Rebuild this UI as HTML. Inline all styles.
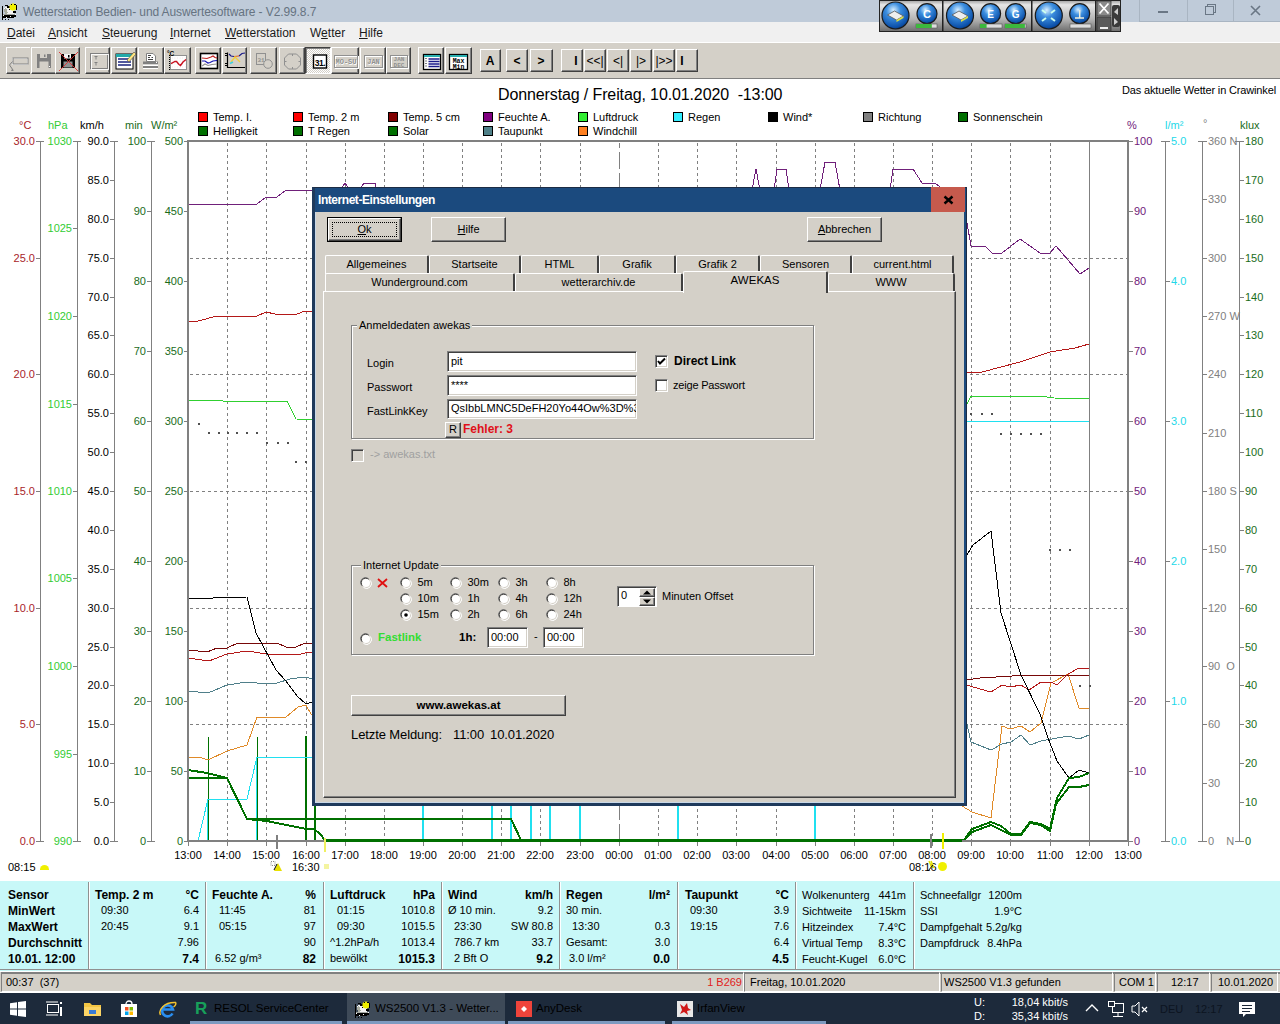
<!DOCTYPE html>
<html><head><meta charset="utf-8"><title>WS</title>
<style>
*{box-sizing:border-box}
html,body{margin:0;padding:0}
body{width:1280px;height:1024px;position:relative;overflow:hidden;background:#fff;font-family:"Liberation Sans", sans-serif;font-size:11px;color:#000}
.a{position:absolute;white-space:pre}
.btn{position:absolute;background:#d4d0c8;border-top:1px solid #fff;border-left:1px solid #fff;border-right:1px solid #404040;border-bottom:1px solid #404040;box-shadow:inset -1px -1px 0 #808080}
.tb{position:absolute;background:#d4d0c8;border-top:1px solid #fff;border-left:1px solid #fff;border-right:1px solid #404040;border-bottom:1px solid #404040;box-shadow:inset -1px -1px 0 #808080}
.sunk{position:absolute;border-top:1px solid #808080;border-left:1px solid #808080;border-right:1px solid #fff;border-bottom:1px solid #fff;box-shadow:inset 1px 1px 0 #404040}
</style></head><body>

<div class="a" style="left:0;top:0;width:1280px;height:22px;background:#bfcbd9"></div>
<svg class="a" style="left:0;top:0" width="22" height="22" viewBox="0 0 22 22" shape-rendering="crispEdges">
<rect x="2" y="6" width="1" height="13" fill="#000"/>
<path d="M4 8 L9 6 L12 9 L15 12 L14 14 L5 14Z" fill="#f4f4f4"/>
<path d="M4 9 L6 8 L8 13 L5 14Z" fill="#a8aca0"/>
<rect x="5" y="5" width="3" height="1" fill="#000"/><rect x="7" y="6" width="3" height="2" fill="#000"/>
<rect x="9" y="9" width="1" height="1" fill="#000"/><rect x="10" y="8" width="1" height="1" fill="#000"/><rect x="11" y="7" width="1" height="1" fill="#000"/>
<circle cx="13" cy="7" r="3.6" fill="#f0f000" shape-rendering="auto"/>
<rect x="16" y="5" width="1" height="5" fill="#000"/><rect x="14" y="4" width="2" height="1" fill="#000"/><rect x="11" y="4" width="1" height="1" fill="#000"/>
<rect x="13" y="11" width="3" height="2" fill="#000"/>
<rect x="3" y="14" width="13" height="1" fill="#a0a4a0"/>
<rect x="2" y="15" width="14" height="2" fill="#000"/><rect x="2" y="17" width="12" height="1" fill="#000"/>
<rect x="3" y="15" width="1" height="1" fill="#fff"/><rect x="6" y="17" width="1" height="1" fill="#fff"/><rect x="10" y="16" width="1" height="1" fill="#fff"/><rect x="15" y="14" width="1" height="1" fill="#fff"/>
<rect x="2" y="19" width="1" height="1" fill="#000"/><rect x="5" y="19" width="1" height="1" fill="#000"/><rect x="8" y="19" width="1" height="1" fill="#000"/>
</svg>
<div class="a" style="left:23px;top:5px;font-size:12px;color:#667381;letter-spacing:-0.1px">Wetterstation Bedien- und Auswertesoftware - V2.99.8.7</div>
<div class="a" style="left:1139px;top:0;width:141px;height:22px;background:#bfcbd9;border-left:1px solid #a9b5c2"></div>
<div class="a" style="left:1187px;top:0;width:1px;height:21px;background:#a9b5c2"></div>
<div class="a" style="left:1233px;top:0;width:1px;height:21px;background:#a9b5c2"></div>
<div class="a" style="left:1139px;top:21px;width:141px;height:1px;background:#a9b5c2"></div>
<div class="a" style="left:1158px;top:11px;width:10px;height:2px;background:#6a7785"></div>
<div class="a" style="left:1205px;top:6px;width:9px;height:9px;border:1px solid #6a7785;box-shadow:2px -2px 0 -1px #bfcbd9, 2px -2px 0 0 #6a7785"></div>
<svg class="a" style="left:1250px;top:5px" width="11" height="11"><path d="M1 1L10 10M10 1L1 10" stroke="#6a7785" stroke-width="1.6"/></svg>
<div class="a" style="left:0;top:22px;width:1280px;height:21px;background:#f0f0f0"></div>
<div class="a" style="left:7px;top:26px;font-size:12px;color:#1a1a1a"><u>D</u>atei</div>
<div class="a" style="left:48px;top:26px;font-size:12px;color:#1a1a1a"><u>A</u>nsicht</div>
<div class="a" style="left:102px;top:26px;font-size:12px;color:#1a1a1a"><u>S</u>teuerung</div>
<div class="a" style="left:170px;top:26px;font-size:12px;color:#1a1a1a"><u>I</u>nternet</div>
<div class="a" style="left:225px;top:26px;font-size:12px;color:#1a1a1a"><u>W</u>etterstation</div>
<div class="a" style="left:310px;top:26px;font-size:12px;color:#1a1a1a">W<u>e</u>tter</div>
<div class="a" style="left:359px;top:26px;font-size:12px;color:#1a1a1a"><u>H</u>ilfe</div>
<div class="a" style="left:0;top:42px;width:1280px;height:37px;background:#d4d0c8;border-top:1px solid #fff;border-bottom:1px solid #808080"></div>
<div class="tb" style="left:6px;top:47px;width:24px;height:27px;border-right:none;box-shadow:inset 0 -1px 0 #808080"></div>
<div class="tb" style="left:31px;top:47px;width:24px;height:27px;border-right:none;box-shadow:inset 0 -1px 0 #808080"></div>
<div class="tb" style="left:55px;top:47px;width:25px;height:27px"></div>
<div class="tb" style="left:85px;top:47px;width:25px;height:27px"></div>
<div class="tb" style="left:111px;top:47px;width:26px;height:27px"></div>
<div class="tb" style="left:138px;top:47px;width:26px;height:27px"></div>
<div class="tb" style="left:164px;top:47px;width:27px;height:27px"></div>
<div class="tb" style="left:195px;top:47px;width:26px;height:27px"></div>
<div class="tb" style="left:222px;top:47px;width:25px;height:27px"></div>
<div class="tb" style="left:250px;top:47px;width:27px;height:27px"></div>
<div class="tb" style="left:279px;top:47px;width:26px;height:27px"></div>
<div class="a" style="left:305px;top:47px;width:26px;height:27px;background:repeating-conic-gradient(#ffffff 0 25%, #d4d0c8 0 50%) 0 0/2px 2px;border-top:1px solid #404040;border-left:1px solid #404040;border-right:1px solid #fff;border-bottom:1px solid #fff;box-shadow:inset 1px 1px 0 #808080"></div>
<div class="tb" style="left:331px;top:47px;width:28px;height:27px"></div>
<div class="tb" style="left:360px;top:47px;width:26px;height:27px"></div>
<div class="tb" style="left:386px;top:47px;width:25px;height:27px"></div>
<div class="tb" style="left:418px;top:47px;width:26px;height:27px"></div>
<div class="tb" style="left:445px;top:47px;width:27px;height:27px"></div>
<div class="tb" style="left:480px;top:49px;width:21px;height:23px"></div>
<div class="tb" style="left:506px;top:49px;width:22px;height:23px"></div>
<div class="tb" style="left:530px;top:49px;width:23px;height:23px"></div>
<div class="tb" style="left:561px;top:49px;width:22px;height:23px"></div>
<div class="tb" style="left:584px;top:49px;width:22px;height:23px"></div>
<div class="tb" style="left:607px;top:49px;width:22px;height:23px"></div>
<div class="tb" style="left:630px;top:49px;width:22px;height:23px"></div>
<div class="tb" style="left:653px;top:49px;width:22px;height:23px"></div>
<div class="tb" style="left:676px;top:49px;width:22px;height:23px"></div>
<svg class="a" style="left:0;top:42px" width="700" height="38" viewBox="0 42 700 38"><rect x="12.5" y="58.5" width="15" height="6" fill="none" stroke="#fff"/><rect x="13" y="58" width="15" height="6" fill="none" stroke="#808080"/><path d="M12.5 61.5 L9.5 65 L13 70" stroke="#808080" fill="none"/><path d="M12 69 L14 71 H11Z" fill="#808080"/><path d="M37 54 H51 V68 H37Z" fill="#808080"/><rect x="40" y="54" width="7" height="4" fill="#d4d0c8"/><rect x="44" y="54.5" width="1.5" height="2.5" fill="#808080"/><rect x="39.5" y="61.5" width="9" height="6.5" fill="#d4d0c8"/><rect x="49" y="66" width="1" height="1" fill="#fff"/><path d="M61 54 H75 V68 H61Z" fill="#000"/><rect x="64" y="54" width="7" height="4.5" fill="#f4f4f4"/><rect x="68" y="55" width="1.5" height="2.5" fill="#000"/><rect x="63.5" y="61.5" width="9" height="6" fill="#909090"/><path d="M59 52L78 71M78 52L59 71" stroke="#e03030" stroke-width="0.9"/><rect x="90.5" y="53.5" width="17" height="15" fill="none" stroke="#808080"/><rect x="91.5" y="54.5" width="17" height="15" fill="none" stroke="#fff" stroke-opacity="0.9"/><path d="M94.5 56.5h3M96 56.5v3M94.5 62.5h3M96 62.5v3" stroke="#808080"/><rect x="116" y="54" width="17" height="15" fill="#fff" stroke="#000"/><rect x="116" y="54" width="17" height="3" fill="#2aa"/><path d="M118 59h13M118 62h13M118 65h13" stroke="#1a237e" stroke-width="1.5"/><path d="M127 60 L134 52 L136 54 L129 62Z" fill="#ffe680" stroke="#444" stroke-width="0.6"/><path d="M146.5 53.5 H153 L155.5 56 V61.5 H146.5Z" fill="#fff" stroke="#808080"/><path d="M148 55.5h3M148 57.5h2M151.5 57.5h1.5M148 59.5h5" stroke="#404040"/><rect x="143" y="61.5" width="15" height="3" fill="#808080"/><rect x="143" y="64.5" width="15" height="1.5" fill="#fff"/><rect x="143" y="66" width="15" height="2" fill="#808080"/><rect x="143" y="68" width="15" height="1" fill="#fff"/><rect x="156" y="62" width="1" height="1" fill="#fff"/><rect x="170.5" y="55.5" width="16" height="14" fill="#fff" stroke="#909090"/><path d="M172 58h14M172 61h14M172 64h14M172 67h14" stroke="#e8b8c0" stroke-width="0.6" stroke-dasharray="0.6 2"/><path d="M169.5 55 V70" stroke="#000" stroke-dasharray="1 1"/><path d="M171 63.6 L175 61.5 L176.5 61.5 L179 64.5 L180.5 65.5 L183 62 L186 59.5" stroke="#c81020" fill="none" stroke-width="1.4"/><text x="167" y="55.5" font-size="6.5" font-weight="bold" font-family="Liberation Sans" fill="#000">°C</text><rect x="200.5" y="53.5" width="17" height="15" fill="#fff" stroke="#000" stroke-width="1.6"/><path d="M202 58 L207 58.5 L211 57 L213 56 L215 57.5 L217 58" stroke="#c02020" fill="none" stroke-width="1.2"/><path d="M202 61 L205 61 L208 63 L210 62.5 L213 61 L217 60.5" stroke="#1010b0" fill="none" stroke-width="1.2"/><path d="M202 66 L205 64 L208 65.5 L212 64.5 L217 64" stroke="#909090" fill="none" stroke-width="1.1"/><path d="M227.5 52.5 V67.5 H245" stroke="#000" fill="none" stroke-width="1.2"/><path d="M225 53.5h2M225 55.5h2M225 63.5h2M225 65.5h2" stroke="#000"/><path d="M229 54 L231 56 L234 56.5 M239 56 L242 53.5 L245 53" stroke="#1a1a8a" fill="none" stroke-width="1.2"/><path d="M234 56.5 L239 56" stroke="#e06020" stroke-width="1.2"/><path d="M231 62 L235 57 L240 62" stroke="#f0d040" fill="none" stroke-width="1.4"/><path d="M230 63.5 L233 62" stroke="#40d0e0" stroke-width="1.6"/><rect x="256.5" y="53.5" width="9" height="11" fill="none" stroke="#909090"/><text x="261" y="61.5" font-size="6" font-family="Liberation Mono" font-weight="bold" fill="#909090" text-anchor="middle">31</text><circle cx="268" cy="64" r="4.3" fill="#d4d0c8" stroke="#909090"/><path d="M288.5 54 H296.5 L300.5 58 V65 L296.5 69 H288.5 L284.5 65 V58Z" fill="none" stroke="#909090"/><path d="M292.5 54v2M292.5 67v2M284.5 61.5h2M298.5 61.5h2" stroke="#909090"/><rect x="313.5" y="55" width="13" height="13" fill="#fff" stroke="#000" stroke-width="1.4"/><text x="320" y="65.5" font-size="8.5" font-weight="bold" text-anchor="middle" font-family="Liberation Sans" letter-spacing="-0.5">31.</text><rect x="335.5" y="56.5" width="23" height="12" fill="none" stroke="#fff"/><rect x="334.5" y="55.5" width="23" height="12" fill="none" stroke="#909090"/><text x="346.6" y="64.6" font-size="7" text-anchor="middle" fill="#fff" font-family="Liberation Mono" font-weight="bold">MO-SU</text><text x="346.0" y="64" font-size="7" text-anchor="middle" fill="#909090" font-family="Liberation Mono" font-weight="bold">MO-SU</text><rect x="365.5" y="56.5" width="18" height="12" fill="none" stroke="#fff"/><rect x="364.5" y="55.5" width="18" height="12" fill="none" stroke="#909090"/><text x="374.1" y="64.6" font-size="7" text-anchor="middle" fill="#fff" font-family="Liberation Mono" font-weight="bold">JAN</text><text x="373.5" y="64" font-size="7" text-anchor="middle" fill="#909090" font-family="Liberation Mono" font-weight="bold">JAN</text><rect x="391.5" y="56.5" width="17" height="12" fill="none" stroke="#fff"/><rect x="390.5" y="55.5" width="17" height="12" fill="none" stroke="#909090"/><text x="399.0" y="61" font-size="6" text-anchor="middle" fill="#909090" font-family="Liberation Mono" font-weight="bold">JAN</text><text x="399.0" y="66.5" font-size="6" text-anchor="middle" fill="#909090" font-family="Liberation Mono" font-weight="bold">DEC</text><rect x="423.5" y="54.5" width="17" height="15" fill="#fff" stroke="#000" stroke-width="1.3"/><rect x="424" y="55" width="16" height="2" fill="#2ab0b0"/><path d="M428.5 59h11M428.5 61.5h11M428.5 64h11M428.5 66.5h11" stroke="#1a1a8a" stroke-width="1.4"/><path d="M426 58v10" stroke="#000" stroke-dasharray="1 1.5"/><rect x="449.5" y="54.5" width="18" height="15" fill="#fff" stroke="#000" stroke-width="1.3"/><rect x="450" y="55" width="17" height="2" fill="#2ab0b0"/><text x="458.5" y="62.5" font-size="6.5" font-weight="bold" text-anchor="middle" font-family="Liberation Mono">Max</text><text x="458.5" y="68.5" font-size="6.5" font-weight="bold" text-anchor="middle" font-family="Liberation Mono">Min</text></svg>
<div class="a" style="left:470px;width:40px;text-align:center;top:54px;font-size:12px;font-weight:bold">A</div>
<div class="a" style="left:497px;width:40px;text-align:center;top:54px;font-size:12px;font-weight:bold">&lt;</div>
<div class="a" style="left:521px;width:40px;text-align:center;top:54px;font-size:12px;font-weight:bold">&gt;</div>
<div class="a" style="left:556px;width:40px;text-align:center;top:54px;font-size:12px;font-weight:bold">I</div>
<div class="a" style="left:575px;width:40px;text-align:center;top:54px;font-size:12px;font-weight:normal">&lt;&lt;|</div>
<div class="a" style="left:598px;width:40px;text-align:center;top:54px;font-size:12px;font-weight:normal">&lt;|</div>
<div class="a" style="left:621px;width:40px;text-align:center;top:54px;font-size:12px;font-weight:normal">|&gt;</div>
<div class="a" style="left:644px;width:40px;text-align:center;top:54px;font-size:12px;font-weight:normal">|&gt;&gt;</div>
<div class="a" style="left:662px;width:40px;text-align:center;top:54px;font-size:12px;font-weight:bold">I</div>
<svg class="a" style="left:879px;top:0" width="242" height="32" viewBox="0 0 242 32"><defs><linearGradient id="wg" x1="0" y1="0" x2="0" y2="1"><stop offset="0" stop-color="#9a9a9a"/><stop offset="0.15" stop-color="#e6e6e6"/><stop offset="0.6" stop-color="#b4b4b4"/><stop offset="1" stop-color="#6a6a6a"/></linearGradient><radialGradient id="bg1" cx="0.42" cy="0.3" r="0.75"><stop offset="0" stop-color="#d8efff"/><stop offset="0.35" stop-color="#3d8fe0"/><stop offset="0.85" stop-color="#0b4fa8"/><stop offset="1" stop-color="#0a2f66"/></radialGradient></defs><rect x="0" y="0" width="242" height="32" fill="url(#wg)"/><rect x="0.5" y="0.5" width="241" height="31" fill="none" stroke="#222"/><rect x="63" y="0" width="1.5" height="32" fill="#222"/><rect x="152" y="0" width="1.5" height="32" fill="#222"/><rect x="216" y="0" width="1.5" height="32" fill="#222"/><circle cx="16.5" cy="15.5" r="13.5" fill="url(#bg1)" stroke="#1a1a1a" stroke-width="1.2"/><circle cx="48" cy="13.7" r="10" fill="url(#bg1)" stroke="#1a1a1a" stroke-width="1.2"/><circle cx="81" cy="15.5" r="13.5" fill="url(#bg1)" stroke="#1a1a1a" stroke-width="1.2"/><circle cx="111.6" cy="13.7" r="10" fill="url(#bg1)" stroke="#1a1a1a" stroke-width="1.2"/><circle cx="136.6" cy="13.7" r="10" fill="url(#bg1)" stroke="#1a1a1a" stroke-width="1.2"/><circle cx="169.8" cy="15.5" r="13.5" fill="url(#bg1)" stroke="#1a1a1a" stroke-width="1.2"/><circle cx="200.7" cy="13.7" r="10" fill="url(#bg1)" stroke="#1a1a1a" stroke-width="1.2"/><path d="M8.5 15 L15.5 11 L24.5 16 L17.5 20Z" fill="#eee" stroke="#555" stroke-width="0.8"/><path d="M17.5 20 L24.5 16 L24.5 18 L17.5 22Z" fill="#dd4"/><path d="M73 15 L80 11 L89 16 L82 20Z" fill="#eee" stroke="#555" stroke-width="0.8"/><path d="M82 20 L89 16 L89 18 L82 22Z" fill="#dd4"/><path d="M163 10 L167 13 M176 10 L172 13 M163 21 L167 18 M176 21 L172 18" stroke="#cfe" stroke-width="2"/><path d="M196 18 L205 18 M200.7 10 V18" stroke="#eed" stroke-width="1.5"/><text x="48" y="17.5" font-family="Liberation Sans" font-weight="bold" font-size="11" fill="#fff" text-anchor="middle">C</text><text x="111.6" y="17.5" font-family="Liberation Sans" font-weight="bold" font-size="10" fill="#fff" text-anchor="middle">E</text><text x="136.6" y="17.5" font-family="Liberation Sans" font-weight="bold" font-size="10" fill="#fff" text-anchor="middle">G</text><rect x="37" y="24" width="21" height="4" fill="#ddd" stroke="#555" stroke-width="0.6"/><rect x="37" y="24" width="15.8" height="4" fill="#3cb83c"/><rect x="101" y="24" width="22" height="4" fill="#ddd" stroke="#555" stroke-width="0.6"/><rect x="101" y="24" width="6.6" height="4" fill="#3cb83c"/><rect x="126" y="24" width="21" height="4" fill="#ddd" stroke="#555" stroke-width="0.6"/><rect x="126" y="24" width="19.9" height="4" fill="#3cb83c"/><rect x="191" y="24" width="21" height="4" fill="#ddd" stroke="#555" stroke-width="0.6"/><rect x="191" y="24" width="0.0" height="4" fill="#3cb83c"/><rect x="218" y="1" width="14" height="15" fill="#8a8a8a" stroke="#333" stroke-width="0.8"/><path d="M220.5 3.5L229.5 13.5M229.5 3.5L220.5 13.5" stroke="#fff" stroke-width="1.8"/><rect x="218" y="17" width="14" height="14" fill="#5a5a5a" stroke="#333" stroke-width="0.8"/><rect x="221" y="27" width="8" height="2" fill="#eee"/><rect x="233" y="5" width="8" height="22" rx="2" fill="#3a3a3a"/><path d="M239 8L235 12L239 15Z M235 18L239 22L235 25Z" fill="#ccc"/></svg>
<svg class="a" style="left:0;top:80px" width="1280" height="801" viewBox="0 80 1280 801" shape-rendering="crispEdges"><line x1="227.5" y1="143" x2="227.5" y2="840" stroke="#808080" stroke-width="1" stroke-dasharray="3 3"/><line x1="266.5" y1="143" x2="266.5" y2="840" stroke="#808080" stroke-width="1" stroke-dasharray="3 3"/><line x1="306.5" y1="143" x2="306.5" y2="840" stroke="#808080" stroke-width="1" stroke-dasharray="3 3"/><line x1="345.5" y1="143" x2="345.5" y2="840" stroke="#808080" stroke-width="1" stroke-dasharray="3 3"/><line x1="384.5" y1="143" x2="384.5" y2="840" stroke="#808080" stroke-width="1" stroke-dasharray="3 3"/><line x1="423.5" y1="143" x2="423.5" y2="840" stroke="#808080" stroke-width="1" stroke-dasharray="3 3"/><line x1="462.5" y1="143" x2="462.5" y2="840" stroke="#808080" stroke-width="1" stroke-dasharray="3 3"/><line x1="501.5" y1="143" x2="501.5" y2="840" stroke="#808080" stroke-width="1" stroke-dasharray="3 3"/><line x1="540.5" y1="143" x2="540.5" y2="840" stroke="#808080" stroke-width="1" stroke-dasharray="3 3"/><line x1="580.5" y1="143" x2="580.5" y2="840" stroke="#808080" stroke-width="1" stroke-dasharray="3 3"/><line x1="619.5" y1="143" x2="619.5" y2="840" stroke="#808080" stroke-width="1" stroke-dasharray="17 4" stroke-dashoffset="12"/><line x1="658.5" y1="143" x2="658.5" y2="840" stroke="#808080" stroke-width="1" stroke-dasharray="3 3"/><line x1="697.5" y1="143" x2="697.5" y2="840" stroke="#808080" stroke-width="1" stroke-dasharray="3 3"/><line x1="736.5" y1="143" x2="736.5" y2="840" stroke="#808080" stroke-width="1" stroke-dasharray="3 3"/><line x1="776.5" y1="143" x2="776.5" y2="840" stroke="#808080" stroke-width="1" stroke-dasharray="3 3"/><line x1="815.5" y1="143" x2="815.5" y2="840" stroke="#808080" stroke-width="1" stroke-dasharray="3 3"/><line x1="854.5" y1="143" x2="854.5" y2="840" stroke="#808080" stroke-width="1" stroke-dasharray="3 3"/><line x1="893.5" y1="143" x2="893.5" y2="840" stroke="#808080" stroke-width="1" stroke-dasharray="3 3"/><line x1="932.5" y1="143" x2="932.5" y2="840" stroke="#808080" stroke-width="1" stroke-dasharray="3 3"/><line x1="971.5" y1="143" x2="971.5" y2="840" stroke="#808080" stroke-width="1" stroke-dasharray="3 3"/><line x1="1010.5" y1="143" x2="1010.5" y2="840" stroke="#808080" stroke-width="1" stroke-dasharray="3 3"/><line x1="1050.5" y1="143" x2="1050.5" y2="840" stroke="#808080" stroke-width="1" stroke-dasharray="3 3"/><line x1="1089.5" y1="142" x2="1089.5" y2="840" stroke="#808080" stroke-width="1"/><line x1="190" y1="258.5" x2="1128" y2="258.5" stroke="#808080" stroke-width="1" stroke-dasharray="3 3"/><line x1="190" y1="374.5" x2="1128" y2="374.5" stroke="#808080" stroke-width="1" stroke-dasharray="3 3"/><line x1="190" y1="491.5" x2="1128" y2="491.5" stroke="#808080" stroke-width="1" stroke-dasharray="3 3"/><line x1="190" y1="608.5" x2="1128" y2="608.5" stroke="#808080" stroke-width="1" stroke-dasharray="3 3"/><line x1="190" y1="724.5" x2="1128" y2="724.5" stroke="#808080" stroke-width="1" stroke-dasharray="3 3"/></svg>
<svg class="a" style="left:0;top:80px" width="1280" height="801" viewBox="0 80 1280 801" shape-rendering="crispEdges"><rect x="198" y="423" width="2" height="2" fill="#505050"/><rect x="208" y="432" width="2" height="2" fill="#505050"/><rect x="218" y="432" width="2" height="2" fill="#505050"/><rect x="227" y="432" width="2" height="2" fill="#505050"/><rect x="236" y="432" width="2" height="2" fill="#505050"/><rect x="246" y="432" width="2" height="2" fill="#505050"/><rect x="256" y="432" width="2" height="2" fill="#505050"/><rect x="266" y="442" width="2" height="2" fill="#505050"/><rect x="277" y="442" width="2" height="2" fill="#505050"/><rect x="287" y="442" width="2" height="2" fill="#505050"/><rect x="295" y="461" width="2" height="2" fill="#505050"/><rect x="305" y="461" width="2" height="2" fill="#505050"/><rect x="970" y="413" width="2" height="2" fill="#505050"/><rect x="981" y="413" width="2" height="2" fill="#505050"/><rect x="991" y="413" width="2" height="2" fill="#505050"/><rect x="1000" y="433" width="2" height="2" fill="#505050"/><rect x="1010" y="433" width="2" height="2" fill="#505050"/><rect x="1020" y="433" width="2" height="2" fill="#505050"/><rect x="1030" y="433" width="2" height="2" fill="#505050"/><rect x="1040" y="433" width="2" height="2" fill="#505050"/><rect x="1049" y="549" width="2" height="2" fill="#505050"/><rect x="1059" y="549" width="2" height="2" fill="#505050"/><rect x="1069" y="549" width="2" height="2" fill="#505050"/><rect x="1079" y="685" width="2" height="2" fill="#505050"/><rect x="1089" y="685" width="2" height="2" fill="#505050"/><rect x="207" y="799" width="2" height="42" fill="#20e0f0"/><rect x="256" y="757" width="2" height="84" fill="#20e0f0"/><rect x="422" y="790" width="2" height="51" fill="#20e0f0"/><rect x="491" y="790" width="2" height="51" fill="#20e0f0"/><rect x="510" y="790" width="2" height="51" fill="#20e0f0"/><rect x="530" y="790" width="2" height="51" fill="#20e0f0"/><rect x="549" y="790" width="2" height="51" fill="#20e0f0"/><rect x="579" y="790" width="2" height="51" fill="#20e0f0"/><rect x="677" y="790" width="2" height="51" fill="#20e0f0"/><rect x="814" y="790" width="2" height="51" fill="#20e0f0"/><rect x="208" y="737" width="1" height="104" fill="#007000"/><rect x="257" y="737" width="1" height="104" fill="#007000"/><rect x="305" y="736" width="2" height="105" fill="#007000"/><rect x="314" y="790" width="2" height="51" fill="#007000"/><polyline points="198,841 208,799 247,799 257,757 330,757" fill="none" stroke="#20e0f0" stroke-width="1" stroke-linejoin="round" /><polyline points="940,421 1089,421" fill="none" stroke="#20e0f0" stroke-width="1" stroke-linejoin="round" /><polyline points="188,204 257,204 266,197 277,197 286,190 340,190 345,183 350,190 359,190 364,183 375,183 377,190 750,190 752,190 756,169 760,190 774,190 777,169 786,169 789,190 820,190 825,162 835,162 840,190 890,190 893,169 913,169 922,183 935,183 950,195 966,217 971,246 985,246 992,253 1002,253 1020,239 1040,253 1050,253 1056,246 1080,274 1089,268" fill="none" stroke="#70207a" stroke-width="1" stroke-linejoin="round" /><polyline points="188,757 199,757 208,760 227,751 247,745 257,717 286,717 298,707 306,705 311,714 330,730 960,805 962,806 972,812 991,818 1002,726 1010,729 1021,726 1030,732 1041,723 1051,683 1068,674 1079,708 1089,708" fill="none" stroke="#e08a28" stroke-width="1" stroke-linejoin="round" /><polyline points="188,691 208,693 227,685 247,682 267,684 277,683 290,679 305,677 313,679 330,680 960,715 967,724 971,742 991,750 1002,744 1011,742 1021,735 1030,745 1041,741 1068,736 1079,739 1089,735" fill="none" stroke="#4f7f8a" stroke-width="1" stroke-linejoin="round" /><polyline points="188,321 198,321 217,316 257,316 266,312 275,314 297,314 305,311 330,311 966,373 982,372 1020,362 1050,352 1075,348 1089,344" fill="none" stroke="#b41818" stroke-width="1" stroke-linejoin="round" /><polyline points="188,400 223,401 287,401 296,419 330,420 960,410 966,406 971,396 1040,396 1054,398 1089,399" fill="none" stroke="#30d030" stroke-width="1" stroke-linejoin="round" /><polyline points="188,650 207,652 217,648 227,648 238,643 277,643 286,647 296,647 305,643 330,643 966,680 980,678 1028,675 1089,675" fill="none" stroke="#780808" stroke-width="1" stroke-linejoin="round" /><polyline points="188,658 209,661 227,654 247,651 267,654 301,654 309,652 330,652 966,685 991,692 1002,685 1010,687 1021,685 1029,690 1041,682 1051,682 1057,685 1068,674 1079,668 1089,668" fill="none" stroke="#b41818" stroke-width="1" stroke-linejoin="round" /><polyline points="188,598 213,598 247,597 256,633 276,670 286,681 297,696 306,704 312,702 330,690 960,570 967,555 973,545 991,531 1001,613 1021,675 1040,714 1048,738 1057,761 1069,778 1079,770 1089,773" fill="none" stroke="#000" stroke-width="1" stroke-linejoin="round" /><polyline points="188,770 207,773 227,778 247,819 267,821 306,829 314,829 320,834 325,840 960,840 964,840 972,829 991,822 1001,826 1011,834 1021,834 1030,822 1041,824 1050,829 1057,798 1069,778 1079,777 1089,773" fill="none" stroke="#007000" stroke-width="2" stroke-linejoin="round" /><polyline points="188,778 227,778 247,819 320,819 511,819 521,840" fill="none" stroke="#007000" stroke-width="2" stroke-linejoin="round" /><polyline points="964,840 972,832 991,825 1011,835 1021,835 1030,823 1041,825 1050,831 1056,804 1069,787 1079,787 1089,785" fill="none" stroke="#007000" stroke-width="2" stroke-linejoin="round" /></svg>
<svg class="a" style="left:0;top:80px" width="1280" height="801" viewBox="0 80 1280 801" shape-rendering="crispEdges"><rect x="187" y="140" width="2" height="702" fill="#808080"/><rect x="187" y="140" width="942" height="2" fill="#808080"/><rect x="1127" y="140" width="2" height="702" fill="#808080"/><rect x="187" y="840" width="942" height="2" fill="#808080"/><rect x="325" y="840" width="637" height="2" fill="#007000"/><rect x="188" y="842" width="1" height="4" fill="#808080"/><rect x="227" y="842" width="1" height="4" fill="#808080"/><rect x="266" y="842" width="1" height="4" fill="#808080"/><rect x="306" y="842" width="1" height="4" fill="#808080"/><rect x="345" y="842" width="1" height="4" fill="#808080"/><rect x="384" y="842" width="1" height="4" fill="#808080"/><rect x="423" y="842" width="1" height="4" fill="#808080"/><rect x="462" y="842" width="1" height="4" fill="#808080"/><rect x="501" y="842" width="1" height="4" fill="#808080"/><rect x="540" y="842" width="1" height="4" fill="#808080"/><rect x="580" y="842" width="1" height="4" fill="#808080"/><rect x="619" y="842" width="1" height="4" fill="#808080"/><rect x="658" y="842" width="1" height="4" fill="#808080"/><rect x="697" y="842" width="1" height="4" fill="#808080"/><rect x="736" y="842" width="1" height="4" fill="#808080"/><rect x="776" y="842" width="1" height="4" fill="#808080"/><rect x="815" y="842" width="1" height="4" fill="#808080"/><rect x="854" y="842" width="1" height="4" fill="#808080"/><rect x="893" y="842" width="1" height="4" fill="#808080"/><rect x="932" y="842" width="1" height="4" fill="#808080"/><rect x="971" y="842" width="1" height="4" fill="#808080"/><rect x="1010" y="842" width="1" height="4" fill="#808080"/><rect x="1050" y="842" width="1" height="4" fill="#808080"/><rect x="1089" y="842" width="1" height="4" fill="#808080"/><rect x="1128" y="842" width="1" height="4" fill="#808080"/><rect x="276" y="835" width="2" height="14" fill="#808080"/><rect x="930" y="834" width="2" height="14" fill="#808080"/><rect x="942" y="833" width="2" height="16" fill="#f0f000"/><rect x="324" y="838" width="2" height="14" fill="#f0f060"/><rect x="40" y="141" width="1" height="701" fill="#808080"/><rect x="77" y="141" width="1" height="701" fill="#808080"/><rect x="114" y="141" width="1" height="701" fill="#808080"/><rect x="151" y="141" width="1" height="701" fill="#808080"/><rect x="1165" y="141" width="1" height="701" fill="#808080"/><rect x="1202" y="141" width="1" height="701" fill="#808080"/><rect x="1239" y="141" width="1" height="701" fill="#808080"/></svg>
<div class="a" style="left:-5px;width:40px;text-align:right;top:135px;color:#a81e2a">30.0</div><div class="a" style="left:36px;top:141px;width:8px;height:1px;background:#808080"></div><div class="a" style="left:-5px;width:40px;text-align:right;top:252px;color:#a81e2a">25.0</div><div class="a" style="left:36px;top:258px;width:4px;height:1px;background:#808080"></div><div class="a" style="left:-5px;width:40px;text-align:right;top:368px;color:#a81e2a">20.0</div><div class="a" style="left:36px;top:374px;width:4px;height:1px;background:#808080"></div><div class="a" style="left:-5px;width:40px;text-align:right;top:485px;color:#a81e2a">15.0</div><div class="a" style="left:36px;top:491px;width:4px;height:1px;background:#808080"></div><div class="a" style="left:-5px;width:40px;text-align:right;top:602px;color:#a81e2a">10.0</div><div class="a" style="left:36px;top:608px;width:4px;height:1px;background:#808080"></div><div class="a" style="left:-5px;width:40px;text-align:right;top:718px;color:#a81e2a">5.0</div><div class="a" style="left:36px;top:724px;width:4px;height:1px;background:#808080"></div><div class="a" style="left:-5px;width:40px;text-align:right;top:835px;color:#a81e2a">0.0</div><div class="a" style="left:36px;top:841px;width:8px;height:1px;background:#808080"></div>
<div class="a" style="left:32px;width:40px;text-align:right;top:135px;color:#33cc33">1030</div><div class="a" style="left:73px;top:141px;width:8px;height:1px;background:#808080"></div><div class="a" style="left:32px;width:40px;text-align:right;top:222px;color:#33cc33">1025</div><div class="a" style="left:73px;top:228px;width:4px;height:1px;background:#808080"></div><div class="a" style="left:32px;width:40px;text-align:right;top:310px;color:#33cc33">1020</div><div class="a" style="left:73px;top:316px;width:4px;height:1px;background:#808080"></div><div class="a" style="left:32px;width:40px;text-align:right;top:398px;color:#33cc33">1015</div><div class="a" style="left:73px;top:404px;width:4px;height:1px;background:#808080"></div><div class="a" style="left:32px;width:40px;text-align:right;top:485px;color:#33cc33">1010</div><div class="a" style="left:73px;top:491px;width:4px;height:1px;background:#808080"></div><div class="a" style="left:32px;width:40px;text-align:right;top:572px;color:#33cc33">1005</div><div class="a" style="left:73px;top:578px;width:4px;height:1px;background:#808080"></div><div class="a" style="left:32px;width:40px;text-align:right;top:660px;color:#33cc33">1000</div><div class="a" style="left:73px;top:666px;width:4px;height:1px;background:#808080"></div><div class="a" style="left:32px;width:40px;text-align:right;top:748px;color:#33cc33">995</div><div class="a" style="left:73px;top:754px;width:4px;height:1px;background:#808080"></div><div class="a" style="left:32px;width:40px;text-align:right;top:835px;color:#33cc33">990</div><div class="a" style="left:73px;top:841px;width:8px;height:1px;background:#808080"></div>
<div class="a" style="left:69px;width:40px;text-align:right;top:135px;color:#000">90.0</div><div class="a" style="left:110px;top:141px;width:8px;height:1px;background:#808080"></div><div class="a" style="left:69px;width:40px;text-align:right;top:174px;color:#000">85.0</div><div class="a" style="left:110px;top:180px;width:4px;height:1px;background:#808080"></div><div class="a" style="left:69px;width:40px;text-align:right;top:213px;color:#000">80.0</div><div class="a" style="left:110px;top:219px;width:4px;height:1px;background:#808080"></div><div class="a" style="left:69px;width:40px;text-align:right;top:252px;color:#000">75.0</div><div class="a" style="left:110px;top:258px;width:4px;height:1px;background:#808080"></div><div class="a" style="left:69px;width:40px;text-align:right;top:291px;color:#000">70.0</div><div class="a" style="left:110px;top:297px;width:4px;height:1px;background:#808080"></div><div class="a" style="left:69px;width:40px;text-align:right;top:329px;color:#000">65.0</div><div class="a" style="left:110px;top:335px;width:4px;height:1px;background:#808080"></div><div class="a" style="left:69px;width:40px;text-align:right;top:368px;color:#000">60.0</div><div class="a" style="left:110px;top:374px;width:4px;height:1px;background:#808080"></div><div class="a" style="left:69px;width:40px;text-align:right;top:407px;color:#000">55.0</div><div class="a" style="left:110px;top:413px;width:4px;height:1px;background:#808080"></div><div class="a" style="left:69px;width:40px;text-align:right;top:446px;color:#000">50.0</div><div class="a" style="left:110px;top:452px;width:4px;height:1px;background:#808080"></div><div class="a" style="left:69px;width:40px;text-align:right;top:485px;color:#000">45.0</div><div class="a" style="left:110px;top:491px;width:4px;height:1px;background:#808080"></div><div class="a" style="left:69px;width:40px;text-align:right;top:524px;color:#000">40.0</div><div class="a" style="left:110px;top:530px;width:4px;height:1px;background:#808080"></div><div class="a" style="left:69px;width:40px;text-align:right;top:563px;color:#000">35.0</div><div class="a" style="left:110px;top:569px;width:4px;height:1px;background:#808080"></div><div class="a" style="left:69px;width:40px;text-align:right;top:602px;color:#000">30.0</div><div class="a" style="left:110px;top:608px;width:4px;height:1px;background:#808080"></div><div class="a" style="left:69px;width:40px;text-align:right;top:641px;color:#000">25.0</div><div class="a" style="left:110px;top:647px;width:4px;height:1px;background:#808080"></div><div class="a" style="left:69px;width:40px;text-align:right;top:679px;color:#000">20.0</div><div class="a" style="left:110px;top:685px;width:4px;height:1px;background:#808080"></div><div class="a" style="left:69px;width:40px;text-align:right;top:718px;color:#000">15.0</div><div class="a" style="left:110px;top:724px;width:4px;height:1px;background:#808080"></div><div class="a" style="left:69px;width:40px;text-align:right;top:757px;color:#000">10.0</div><div class="a" style="left:110px;top:763px;width:4px;height:1px;background:#808080"></div><div class="a" style="left:69px;width:40px;text-align:right;top:796px;color:#000">5.0</div><div class="a" style="left:110px;top:802px;width:4px;height:1px;background:#808080"></div><div class="a" style="left:69px;width:40px;text-align:right;top:835px;color:#000">0.0</div><div class="a" style="left:110px;top:841px;width:8px;height:1px;background:#808080"></div>
<div class="a" style="left:106px;width:40px;text-align:right;top:135px;color:#1a6c1a">100</div><div class="a" style="left:147px;top:141px;width:8px;height:1px;background:#808080"></div><div class="a" style="left:106px;width:40px;text-align:right;top:205px;color:#1a6c1a">90</div><div class="a" style="left:147px;top:211px;width:4px;height:1px;background:#808080"></div><div class="a" style="left:106px;width:40px;text-align:right;top:275px;color:#1a6c1a">80</div><div class="a" style="left:147px;top:281px;width:4px;height:1px;background:#808080"></div><div class="a" style="left:106px;width:40px;text-align:right;top:345px;color:#1a6c1a">70</div><div class="a" style="left:147px;top:351px;width:4px;height:1px;background:#808080"></div><div class="a" style="left:106px;width:40px;text-align:right;top:415px;color:#1a6c1a">60</div><div class="a" style="left:147px;top:421px;width:4px;height:1px;background:#808080"></div><div class="a" style="left:106px;width:40px;text-align:right;top:485px;color:#1a6c1a">50</div><div class="a" style="left:147px;top:491px;width:4px;height:1px;background:#808080"></div><div class="a" style="left:106px;width:40px;text-align:right;top:555px;color:#1a6c1a">40</div><div class="a" style="left:147px;top:561px;width:4px;height:1px;background:#808080"></div><div class="a" style="left:106px;width:40px;text-align:right;top:625px;color:#1a6c1a">30</div><div class="a" style="left:147px;top:631px;width:4px;height:1px;background:#808080"></div><div class="a" style="left:106px;width:40px;text-align:right;top:695px;color:#1a6c1a">20</div><div class="a" style="left:147px;top:701px;width:4px;height:1px;background:#808080"></div><div class="a" style="left:106px;width:40px;text-align:right;top:765px;color:#1a6c1a">10</div><div class="a" style="left:147px;top:771px;width:4px;height:1px;background:#808080"></div><div class="a" style="left:106px;width:40px;text-align:right;top:835px;color:#1a6c1a">0</div><div class="a" style="left:147px;top:841px;width:8px;height:1px;background:#808080"></div>
<div class="a" style="left:143px;width:40px;text-align:right;top:135px;color:#1a6c1a">500</div><div class="a" style="left:184px;top:141px;width:8px;height:1px;background:#808080"></div><div class="a" style="left:143px;width:40px;text-align:right;top:205px;color:#1a6c1a">450</div><div class="a" style="left:184px;top:211px;width:4px;height:1px;background:#808080"></div><div class="a" style="left:143px;width:40px;text-align:right;top:275px;color:#1a6c1a">400</div><div class="a" style="left:184px;top:281px;width:4px;height:1px;background:#808080"></div><div class="a" style="left:143px;width:40px;text-align:right;top:345px;color:#1a6c1a">350</div><div class="a" style="left:184px;top:351px;width:4px;height:1px;background:#808080"></div><div class="a" style="left:143px;width:40px;text-align:right;top:415px;color:#1a6c1a">300</div><div class="a" style="left:184px;top:421px;width:4px;height:1px;background:#808080"></div><div class="a" style="left:143px;width:40px;text-align:right;top:485px;color:#1a6c1a">250</div><div class="a" style="left:184px;top:491px;width:4px;height:1px;background:#808080"></div><div class="a" style="left:143px;width:40px;text-align:right;top:555px;color:#1a6c1a">200</div><div class="a" style="left:184px;top:561px;width:4px;height:1px;background:#808080"></div><div class="a" style="left:143px;width:40px;text-align:right;top:625px;color:#1a6c1a">150</div><div class="a" style="left:184px;top:631px;width:4px;height:1px;background:#808080"></div><div class="a" style="left:143px;width:40px;text-align:right;top:695px;color:#1a6c1a">100</div><div class="a" style="left:184px;top:701px;width:4px;height:1px;background:#808080"></div><div class="a" style="left:143px;width:40px;text-align:right;top:765px;color:#1a6c1a">50</div><div class="a" style="left:184px;top:771px;width:4px;height:1px;background:#808080"></div><div class="a" style="left:143px;width:40px;text-align:right;top:835px;color:#1a6c1a">0</div><div class="a" style="left:184px;top:841px;width:8px;height:1px;background:#808080"></div>
<div class="a" style="left:1134px;top:135px;color:#70207a">100</div><div class="a" style="left:1129px;top:141px;width:4px;height:1px;background:#808080"></div><div class="a" style="left:1134px;top:205px;color:#70207a">90</div><div class="a" style="left:1129px;top:211px;width:4px;height:1px;background:#808080"></div><div class="a" style="left:1134px;top:275px;color:#70207a">80</div><div class="a" style="left:1129px;top:281px;width:4px;height:1px;background:#808080"></div><div class="a" style="left:1134px;top:345px;color:#70207a">70</div><div class="a" style="left:1129px;top:351px;width:4px;height:1px;background:#808080"></div><div class="a" style="left:1134px;top:415px;color:#70207a">60</div><div class="a" style="left:1129px;top:421px;width:4px;height:1px;background:#808080"></div><div class="a" style="left:1134px;top:485px;color:#70207a">50</div><div class="a" style="left:1129px;top:491px;width:4px;height:1px;background:#808080"></div><div class="a" style="left:1134px;top:555px;color:#70207a">40</div><div class="a" style="left:1129px;top:561px;width:4px;height:1px;background:#808080"></div><div class="a" style="left:1134px;top:625px;color:#70207a">30</div><div class="a" style="left:1129px;top:631px;width:4px;height:1px;background:#808080"></div><div class="a" style="left:1134px;top:695px;color:#70207a">20</div><div class="a" style="left:1129px;top:701px;width:4px;height:1px;background:#808080"></div><div class="a" style="left:1134px;top:765px;color:#70207a">10</div><div class="a" style="left:1129px;top:771px;width:4px;height:1px;background:#808080"></div><div class="a" style="left:1134px;top:835px;color:#70207a">0</div><div class="a" style="left:1129px;top:841px;width:4px;height:1px;background:#808080"></div>
<div class="a" style="left:1171px;top:135px;color:#22d8e8">5.0</div><div class="a" style="left:1161px;top:141px;width:9px;height:1px;background:#808080"></div><div class="a" style="left:1171px;top:275px;color:#22d8e8">4.0</div><div class="a" style="left:1166px;top:281px;width:4px;height:1px;background:#808080"></div><div class="a" style="left:1171px;top:415px;color:#22d8e8">3.0</div><div class="a" style="left:1166px;top:421px;width:4px;height:1px;background:#808080"></div><div class="a" style="left:1171px;top:555px;color:#22d8e8">2.0</div><div class="a" style="left:1166px;top:561px;width:4px;height:1px;background:#808080"></div><div class="a" style="left:1171px;top:695px;color:#22d8e8">1.0</div><div class="a" style="left:1166px;top:701px;width:4px;height:1px;background:#808080"></div><div class="a" style="left:1171px;top:835px;color:#22d8e8">0.0</div><div class="a" style="left:1161px;top:841px;width:9px;height:1px;background:#808080"></div>
<div class="a" style="left:1208px;top:135px;color:#808080">360 N</div><div class="a" style="left:1198px;top:141px;width:9px;height:1px;background:#808080"></div><div class="a" style="left:1208px;top:193px;color:#808080">330</div><div class="a" style="left:1203px;top:199px;width:4px;height:1px;background:#808080"></div><div class="a" style="left:1208px;top:252px;color:#808080">300</div><div class="a" style="left:1203px;top:258px;width:4px;height:1px;background:#808080"></div><div class="a" style="left:1208px;top:310px;color:#808080">270 W</div><div class="a" style="left:1203px;top:316px;width:4px;height:1px;background:#808080"></div><div class="a" style="left:1208px;top:368px;color:#808080">240</div><div class="a" style="left:1203px;top:374px;width:4px;height:1px;background:#808080"></div><div class="a" style="left:1208px;top:427px;color:#808080">210</div><div class="a" style="left:1203px;top:433px;width:4px;height:1px;background:#808080"></div><div class="a" style="left:1208px;top:485px;color:#808080">180 S</div><div class="a" style="left:1203px;top:491px;width:4px;height:1px;background:#808080"></div><div class="a" style="left:1208px;top:543px;color:#808080">150</div><div class="a" style="left:1203px;top:549px;width:4px;height:1px;background:#808080"></div><div class="a" style="left:1208px;top:602px;color:#808080">120</div><div class="a" style="left:1203px;top:608px;width:4px;height:1px;background:#808080"></div><div class="a" style="left:1208px;top:660px;color:#808080">90  O</div><div class="a" style="left:1203px;top:666px;width:4px;height:1px;background:#808080"></div><div class="a" style="left:1208px;top:718px;color:#808080">60</div><div class="a" style="left:1203px;top:724px;width:4px;height:1px;background:#808080"></div><div class="a" style="left:1208px;top:777px;color:#808080">30</div><div class="a" style="left:1203px;top:783px;width:4px;height:1px;background:#808080"></div><div class="a" style="left:1208px;top:835px;color:#808080">0    N</div><div class="a" style="left:1198px;top:841px;width:9px;height:1px;background:#808080"></div>
<div class="a" style="left:1245px;top:135px;color:#1a6c1a">180</div><div class="a" style="left:1235px;top:141px;width:9px;height:1px;background:#808080"></div><div class="a" style="left:1245px;top:174px;color:#1a6c1a">170</div><div class="a" style="left:1240px;top:180px;width:4px;height:1px;background:#808080"></div><div class="a" style="left:1245px;top:213px;color:#1a6c1a">160</div><div class="a" style="left:1240px;top:219px;width:4px;height:1px;background:#808080"></div><div class="a" style="left:1245px;top:252px;color:#1a6c1a">150</div><div class="a" style="left:1240px;top:258px;width:4px;height:1px;background:#808080"></div><div class="a" style="left:1245px;top:291px;color:#1a6c1a">140</div><div class="a" style="left:1240px;top:297px;width:4px;height:1px;background:#808080"></div><div class="a" style="left:1245px;top:329px;color:#1a6c1a">130</div><div class="a" style="left:1240px;top:335px;width:4px;height:1px;background:#808080"></div><div class="a" style="left:1245px;top:368px;color:#1a6c1a">120</div><div class="a" style="left:1240px;top:374px;width:4px;height:1px;background:#808080"></div><div class="a" style="left:1245px;top:407px;color:#1a6c1a">110</div><div class="a" style="left:1240px;top:413px;width:4px;height:1px;background:#808080"></div><div class="a" style="left:1245px;top:446px;color:#1a6c1a">100</div><div class="a" style="left:1240px;top:452px;width:4px;height:1px;background:#808080"></div><div class="a" style="left:1245px;top:485px;color:#1a6c1a">90</div><div class="a" style="left:1240px;top:491px;width:4px;height:1px;background:#808080"></div><div class="a" style="left:1245px;top:524px;color:#1a6c1a">80</div><div class="a" style="left:1240px;top:530px;width:4px;height:1px;background:#808080"></div><div class="a" style="left:1245px;top:563px;color:#1a6c1a">70</div><div class="a" style="left:1240px;top:569px;width:4px;height:1px;background:#808080"></div><div class="a" style="left:1245px;top:602px;color:#1a6c1a">60</div><div class="a" style="left:1240px;top:608px;width:4px;height:1px;background:#808080"></div><div class="a" style="left:1245px;top:641px;color:#1a6c1a">50</div><div class="a" style="left:1240px;top:647px;width:4px;height:1px;background:#808080"></div><div class="a" style="left:1245px;top:679px;color:#1a6c1a">40</div><div class="a" style="left:1240px;top:685px;width:4px;height:1px;background:#808080"></div><div class="a" style="left:1245px;top:718px;color:#1a6c1a">30</div><div class="a" style="left:1240px;top:724px;width:4px;height:1px;background:#808080"></div><div class="a" style="left:1245px;top:757px;color:#1a6c1a">20</div><div class="a" style="left:1240px;top:763px;width:4px;height:1px;background:#808080"></div><div class="a" style="left:1245px;top:796px;color:#1a6c1a">10</div><div class="a" style="left:1240px;top:802px;width:4px;height:1px;background:#808080"></div><div class="a" style="left:1245px;top:835px;color:#1a6c1a">0</div><div class="a" style="left:1235px;top:841px;width:9px;height:1px;background:#808080"></div>
<div class="a" style="left:19px;top:119px;color:#a81e2a">°C</div>
<div class="a" style="left:48px;top:119px;color:#33cc33">hPa</div>
<div class="a" style="left:80px;top:119px;color:#000">km/h</div>
<div class="a" style="left:125px;top:119px;color:#1a6c1a">min</div>
<div class="a" style="left:151px;top:119px;color:#1a6c1a">W/m²</div>
<div class="a" style="left:1127px;top:119px;color:#70207a">%</div>
<div class="a" style="left:1165px;top:119px;color:#22d8e8">l/m²</div>
<div class="a" style="left:1203px;top:117px;color:#808080">°</div>
<div class="a" style="left:1240px;top:119px;color:#1a6c1a">klux</div>
<div class="a" style="left:168px;width:40px;text-align:center;top:849px">13:00</div><div class="a" style="left:207px;width:40px;text-align:center;top:849px">14:00</div><div class="a" style="left:246px;width:40px;text-align:center;top:849px">15:00</div><div class="a" style="left:286px;width:40px;text-align:center;top:849px">16:00</div><div class="a" style="left:325px;width:40px;text-align:center;top:849px">17:00</div><div class="a" style="left:364px;width:40px;text-align:center;top:849px">18:00</div><div class="a" style="left:403px;width:40px;text-align:center;top:849px">19:00</div><div class="a" style="left:442px;width:40px;text-align:center;top:849px">20:00</div><div class="a" style="left:481px;width:40px;text-align:center;top:849px">21:00</div><div class="a" style="left:520px;width:40px;text-align:center;top:849px">22:00</div><div class="a" style="left:560px;width:40px;text-align:center;top:849px">23:00</div><div class="a" style="left:599px;width:40px;text-align:center;top:849px">00:00</div><div class="a" style="left:638px;width:40px;text-align:center;top:849px">01:00</div><div class="a" style="left:677px;width:40px;text-align:center;top:849px">02:00</div><div class="a" style="left:716px;width:40px;text-align:center;top:849px">03:00</div><div class="a" style="left:756px;width:40px;text-align:center;top:849px">04:00</div><div class="a" style="left:795px;width:40px;text-align:center;top:849px">05:00</div><div class="a" style="left:834px;width:40px;text-align:center;top:849px">06:00</div><div class="a" style="left:873px;width:40px;text-align:center;top:849px">07:00</div><div class="a" style="left:912px;width:40px;text-align:center;top:849px">08:00</div><div class="a" style="left:951px;width:40px;text-align:center;top:849px">09:00</div><div class="a" style="left:990px;width:40px;text-align:center;top:849px">10:00</div><div class="a" style="left:1030px;width:40px;text-align:center;top:849px">11:00</div><div class="a" style="left:1069px;width:40px;text-align:center;top:849px">12:00</div><div class="a" style="left:1108px;width:40px;text-align:center;top:849px">13:00</div>
<div class="a" style="left:8px;top:861px">08:15</div>
<div class="a" style="left:40px;top:865px;width:9px;height:5px;background:#f0f000;border-radius:5px 5px 0 0"></div>
<div class="a" style="left:292px;top:861px">16:30</div>
<svg class="a" style="left:270px;top:861px" width="14" height="12"><path d="M8 2 L12 10 H4Z" fill="#e8e000"/><path d="M7 3 L4 9" stroke="#000" stroke-width="1"/><rect x="1" y="0.5" width="4" height="4" fill="none" stroke="#888" stroke-dasharray="1 1"/></svg>
<div class="a" style="left:324px;top:864px;width:5px;height:5px;background:#f4f4a0"></div>
<div class="a" style="left:909px;top:861px">08:16</div>
<div class="a" style="left:938px;top:862px;width:9px;height:9px;background:#f0f000;border-radius:50%"></div>
<svg class="a" style="left:926px;top:860px" width="10" height="12"><path d="M3 1 L6 8 M5 1 L8 8" stroke="#e0e000" stroke-width="1.5"/><path d="M2 11 L7 5" stroke="#000"/></svg>
<div class="a" style="left:498px;top:86px;font-size:16px;letter-spacing:-0.12px">Donnerstag / Freitag, 10.01.2020  -13:00</div>
<div class="a" style="left:1122px;top:84px;font-size:11px;letter-spacing:-0.15px">Das aktuelle Wetter in Crawinkel</div>
<div class="a" style="left:198px;top:112px;width:10px;height:10px;background:#ff0000;border:1px solid #000"></div><div class="a" style="left:213px;top:111px">Temp. I.</div><div class="a" style="left:293px;top:112px;width:10px;height:10px;background:#ff0000;border:1px solid #000"></div><div class="a" style="left:308px;top:111px">Temp. 2 m</div><div class="a" style="left:388px;top:112px;width:10px;height:10px;background:#800000;border:1px solid #000"></div><div class="a" style="left:403px;top:111px">Temp. 5 cm</div><div class="a" style="left:483px;top:112px;width:10px;height:10px;background:#800080;border:1px solid #000"></div><div class="a" style="left:498px;top:111px">Feuchte A.</div><div class="a" style="left:578px;top:112px;width:10px;height:10px;background:#33ee33;border:1px solid #000"></div><div class="a" style="left:593px;top:111px">Luftdruck</div><div class="a" style="left:673px;top:112px;width:10px;height:10px;background:#33eeff;border:1px solid #000"></div><div class="a" style="left:688px;top:111px">Regen</div><div class="a" style="left:768px;top:112px;width:10px;height:10px;background:#000000;border:1px solid #000"></div><div class="a" style="left:783px;top:111px">Wind*</div><div class="a" style="left:863px;top:112px;width:10px;height:10px;background:#808080;border:1px solid #000"></div><div class="a" style="left:878px;top:111px">Richtung</div><div class="a" style="left:958px;top:112px;width:10px;height:10px;background:#007000;border:1px solid #000"></div><div class="a" style="left:973px;top:111px">Sonnenschein</div><div class="a" style="left:198px;top:126px;width:10px;height:10px;background:#007000;border:1px solid #000"></div><div class="a" style="left:213px;top:125px">Helligkeit</div><div class="a" style="left:293px;top:126px;width:10px;height:10px;background:#007000;border:1px solid #000"></div><div class="a" style="left:308px;top:125px">T Regen</div><div class="a" style="left:388px;top:126px;width:10px;height:10px;background:#007000;border:1px solid #000"></div><div class="a" style="left:403px;top:125px">Solar</div><div class="a" style="left:483px;top:126px;width:10px;height:10px;background:#4f8088;border:1px solid #000"></div><div class="a" style="left:498px;top:125px">Taupunkt</div><div class="a" style="left:578px;top:126px;width:10px;height:10px;background:#ff8020;border:1px solid #000"></div><div class="a" style="left:593px;top:125px">Windchill</div>
<div class="a" style="left:312px;top:187px;width:655px;height:619px;background:#1b4a7e;border-left:3px solid #1f3a5c;border-bottom:3px solid #1f3a5c;border-top:1px solid #1c2c44;border-right:1px solid #1c2c44"></div><div class="a" style="left:315px;top:212px;width:649px;height:591px;background:#d4d0c8;border-left:1px solid #c8d8e8;border-bottom:1px solid #c8d8e8"></div><div class="a" style="left:318px;top:193px;color:#fff;font-weight:bold;font-size:12px;letter-spacing:-0.45px">Internet-Einstellungen</div><div class="a" style="left:931px;top:187px;width:34px;height:25px;background:#c65a4d"></div><svg class="a" style="left:943px;top:195px" width="11" height="10"><path d="M1.5 1.5L9.5 8.5M9.5 1.5L1.5 8.5" stroke="#000" stroke-width="2.4"/></svg><div class="a" style="left:327px;top:217px;width:75px;height:25px;border:1px solid #000"></div><div class="btn" style="left:328px;top:218px;width:73px;height:23px"></div><div class="a" style="left:332px;top:222px;width:65px;height:15px;border:1px dotted #000"></div><div class="a" style="left:327px;top:223px;width:75px;text-align:center;font-size:11px;font-weight:normal"><u>O</u>k</div><div class="btn" style="left:431px;top:217px;width:75px;height:25px"></div><div class="a" style="left:431px;top:223px;width:75px;text-align:center;font-size:11px;font-weight:normal"><u>H</u>ilfe</div><div class="btn" style="left:807px;top:217px;width:75px;height:25px"></div><div class="a" style="left:807px;top:223px;width:75px;text-align:center;font-size:11px;font-weight:normal"><u>A</u>bbrechen</div><div class="a" style="left:323px;top:291px;width:633px;height:507px;border-top:1px solid #fff;border-left:1px solid #fff;border-right:1px solid #404040;border-bottom:1px solid #404040;box-shadow:inset -1px -1px 0 #808080"></div><div class="a" style="left:325px;top:255px;width:104px;height:19px;background:#d4d0c8;border-top:1px solid #fff;border-left:1px solid #fff;border-right:2px solid #404040;border-radius:2px 2px 0 0"></div><div class="a" style="left:325px;top:258px;width:103px;text-align:center">Allgemeines</div><div class="a" style="left:429px;top:255px;width:92px;height:19px;background:#d4d0c8;border-top:1px solid #fff;border-left:1px solid #fff;border-right:2px solid #404040;border-radius:2px 2px 0 0"></div><div class="a" style="left:429px;top:258px;width:91px;text-align:center">Startseite</div><div class="a" style="left:521px;top:255px;width:78px;height:19px;background:#d4d0c8;border-top:1px solid #fff;border-left:1px solid #fff;border-right:2px solid #404040;border-radius:2px 2px 0 0"></div><div class="a" style="left:521px;top:258px;width:77px;text-align:center">HTML</div><div class="a" style="left:599px;top:255px;width:77px;height:19px;background:#d4d0c8;border-top:1px solid #fff;border-left:1px solid #fff;border-right:2px solid #404040;border-radius:2px 2px 0 0"></div><div class="a" style="left:599px;top:258px;width:76px;text-align:center">Grafik</div><div class="a" style="left:676px;top:255px;width:84px;height:19px;background:#d4d0c8;border-top:1px solid #fff;border-left:1px solid #fff;border-right:2px solid #404040;border-radius:2px 2px 0 0"></div><div class="a" style="left:676px;top:258px;width:83px;text-align:center">Grafik 2</div><div class="a" style="left:760px;top:255px;width:92px;height:19px;background:#d4d0c8;border-top:1px solid #fff;border-left:1px solid #fff;border-right:2px solid #404040;border-radius:2px 2px 0 0"></div><div class="a" style="left:760px;top:258px;width:91px;text-align:center">Sensoren</div><div class="a" style="left:852px;top:255px;width:102px;height:19px;background:#d4d0c8;border-top:1px solid #fff;border-left:1px solid #fff;border-right:2px solid #404040;border-radius:2px 2px 0 0"></div><div class="a" style="left:852px;top:258px;width:101px;text-align:center">current.html</div><div class="a" style="left:325px;top:273px;width:190px;height:18px;background:#d4d0c8;border-top:1px solid #fff;border-left:1px solid #fff;border-right:2px solid #404040;border-radius:2px 2px 0 0"></div><div class="a" style="left:325px;top:276px;width:189px;text-align:center">Wunderground.com</div><div class="a" style="left:515px;top:273px;width:168px;height:18px;background:#d4d0c8;border-top:1px solid #fff;border-left:1px solid #fff;border-right:2px solid #404040;border-radius:2px 2px 0 0"></div><div class="a" style="left:515px;top:276px;width:167px;text-align:center">wetterarchiv.de</div><div class="a" style="left:828px;top:273px;width:127px;height:18px;background:#d4d0c8;border-top:1px solid #fff;border-left:1px solid #fff;border-right:2px solid #404040;border-radius:2px 2px 0 0"></div><div class="a" style="left:828px;top:276px;width:126px;text-align:center">WWW</div><div class="a" style="left:683px;top:271px;width:145px;height:22px;background:#d4d0c8;border-top:1px solid #fff;border-left:1px solid #fff;border-right:2px solid #404040;border-radius:2px 2px 0 0"></div><div class="a" style="left:683px;top:274px;width:144px;text-align:center;font-size:11.5px">AWEKAS</div><div class="a" style="left:351px;top:325px;width:463px;height:114px;border:1px solid #808080;box-shadow:1px 1px 0 #fff, inset 1px 1px 0 #fff"></div><div class="a" style="left:357px;top:319px;background:#d4d0c8;padding:0 2px">Anmeldedaten awekas</div><div class="a" style="left:367px;top:357px">Login</div><div class="a" style="left:367px;top:381px">Passwort</div><div class="a" style="left:367px;top:405px">FastLinkKey</div><div class="a" style="left:447px;top:351px;width:190px;height:21px;background:#fff;border-top:1px solid #808080;border-left:1px solid #808080;border-right:1px solid #fff;border-bottom:1px solid #fff;box-shadow:inset 1px 1px 0 #404040, inset -1px -1px 0 #d4d0c8;overflow:hidden"><div class="a" style="left:3px;top:3px;font-size:11px">pit</div></div><div class="a" style="left:447px;top:375px;width:190px;height:21px;background:#fff;border-top:1px solid #808080;border-left:1px solid #808080;border-right:1px solid #fff;border-bottom:1px solid #fff;box-shadow:inset 1px 1px 0 #404040, inset -1px -1px 0 #d4d0c8;overflow:hidden"><div class="a" style="left:3px;top:3px;font-size:11px">****</div></div><div class="a" style="left:447px;top:399px;width:190px;height:20px;background:#fff;border-top:1px solid #808080;border-left:1px solid #808080;border-right:1px solid #fff;border-bottom:1px solid #fff;box-shadow:inset 1px 1px 0 #404040, inset -1px -1px 0 #d4d0c8;overflow:hidden"><div class="a" style="left:3px;top:2px;font-size:11px">QsIbbLMNC5DeFH20Yo44Ow%3D%3D</div></div><div class="btn" style="left:445px;top:422px;width:16px;height:16px"></div><div class="a" style="left:445px;top:423px;width:16px;text-align:center;font-size:11px;font-weight:normal">R</div><div class="a" style="left:463px;top:422px;color:#e0101a;font-weight:bold;font-size:12px">Fehler: 3</div><div class="a" style="left:655px;top:355px;width:13px;height:13px;background:#fff;border-top:1px solid #808080;border-left:1px solid #808080;border-right:1px solid #fff;border-bottom:1px solid #fff;box-shadow:inset 1px 1px 0 #404040, inset -1px -1px 0 #d4d0c8"></div><svg class="a" style="left:655px;top:355px" width="13" height="13"><path d="M3 6 L5 8.5 L10 3.5" stroke="#000" stroke-width="2" fill="none"/></svg><div class="a" style="left:674px;top:354px;font-weight:bold;font-size:12px">Direct Link</div><div class="a" style="left:655px;top:379px;width:13px;height:13px;background:#fff;border-top:1px solid #808080;border-left:1px solid #808080;border-right:1px solid #fff;border-bottom:1px solid #fff;box-shadow:inset 1px 1px 0 #404040, inset -1px -1px 0 #d4d0c8"></div><div class="a" style="left:673px;top:379px;letter-spacing:-0.2px">zeige Passwort</div><div class="a" style="left:351px;top:449px;width:13px;height:13px;background:#d4d0c8;border-top:1px solid #808080;border-left:1px solid #808080;border-right:1px solid #fff;border-bottom:1px solid #fff;box-shadow:inset 1px 1px 0 #404040, inset -1px -1px 0 #d4d0c8"></div><div class="a" style="left:370px;top:448px;color:#a0a0a0">-&gt; awekas.txt</div><div class="a" style="left:351px;top:565px;width:463px;height:90px;border:1px solid #808080;box-shadow:1px 1px 0 #fff, inset 1px 1px 0 #fff"></div><div class="a" style="left:361px;top:559px;background:#d4d0c8;padding:0 2px">Internet Update</div><svg class="a" style="left:360px;top:577px" width="12" height="12" viewBox="0 0 12 12"><path d="M1.5 8.5 A5 5 0 0 1 8.5 1.5" fill="none" stroke="#808080" stroke-width="1"/><path d="M2.5 8.8 A4 4 0 0 1 8.8 2.5" fill="none" stroke="#404040" stroke-width="1"/><circle cx="6" cy="6" r="4" fill="#fff"/><path d="M10.5 3.5 A5 5 0 0 1 3.5 10.5" fill="none" stroke="#fff" stroke-width="1"/></svg><svg class="a" style="left:377px;top:578px" width="11" height="10"><path d="M1 1L10 9M10 1L1 9" stroke="#e01010" stroke-width="1.8"/></svg><svg class="a" style="left:400px;top:577px" width="12" height="12" viewBox="0 0 12 12"><path d="M1.5 8.5 A5 5 0 0 1 8.5 1.5" fill="none" stroke="#808080" stroke-width="1"/><path d="M2.5 8.8 A4 4 0 0 1 8.8 2.5" fill="none" stroke="#404040" stroke-width="1"/><circle cx="6" cy="6" r="4" fill="#fff"/><path d="M10.5 3.5 A5 5 0 0 1 3.5 10.5" fill="none" stroke="#fff" stroke-width="1"/></svg><div class="a" style="left:417.5px;top:576px">5m</div><svg class="a" style="left:450px;top:577px" width="12" height="12" viewBox="0 0 12 12"><path d="M1.5 8.5 A5 5 0 0 1 8.5 1.5" fill="none" stroke="#808080" stroke-width="1"/><path d="M2.5 8.8 A4 4 0 0 1 8.8 2.5" fill="none" stroke="#404040" stroke-width="1"/><circle cx="6" cy="6" r="4" fill="#fff"/><path d="M10.5 3.5 A5 5 0 0 1 3.5 10.5" fill="none" stroke="#fff" stroke-width="1"/></svg><div class="a" style="left:467.5px;top:576px">30m</div><svg class="a" style="left:498px;top:577px" width="12" height="12" viewBox="0 0 12 12"><path d="M1.5 8.5 A5 5 0 0 1 8.5 1.5" fill="none" stroke="#808080" stroke-width="1"/><path d="M2.5 8.8 A4 4 0 0 1 8.8 2.5" fill="none" stroke="#404040" stroke-width="1"/><circle cx="6" cy="6" r="4" fill="#fff"/><path d="M10.5 3.5 A5 5 0 0 1 3.5 10.5" fill="none" stroke="#fff" stroke-width="1"/></svg><div class="a" style="left:515.5px;top:576px">3h</div><svg class="a" style="left:546px;top:577px" width="12" height="12" viewBox="0 0 12 12"><path d="M1.5 8.5 A5 5 0 0 1 8.5 1.5" fill="none" stroke="#808080" stroke-width="1"/><path d="M2.5 8.8 A4 4 0 0 1 8.8 2.5" fill="none" stroke="#404040" stroke-width="1"/><circle cx="6" cy="6" r="4" fill="#fff"/><path d="M10.5 3.5 A5 5 0 0 1 3.5 10.5" fill="none" stroke="#fff" stroke-width="1"/></svg><div class="a" style="left:563.5px;top:576px">8h</div><svg class="a" style="left:400px;top:593px" width="12" height="12" viewBox="0 0 12 12"><path d="M1.5 8.5 A5 5 0 0 1 8.5 1.5" fill="none" stroke="#808080" stroke-width="1"/><path d="M2.5 8.8 A4 4 0 0 1 8.8 2.5" fill="none" stroke="#404040" stroke-width="1"/><circle cx="6" cy="6" r="4" fill="#fff"/><path d="M10.5 3.5 A5 5 0 0 1 3.5 10.5" fill="none" stroke="#fff" stroke-width="1"/></svg><div class="a" style="left:417.5px;top:592px">10m</div><svg class="a" style="left:450px;top:593px" width="12" height="12" viewBox="0 0 12 12"><path d="M1.5 8.5 A5 5 0 0 1 8.5 1.5" fill="none" stroke="#808080" stroke-width="1"/><path d="M2.5 8.8 A4 4 0 0 1 8.8 2.5" fill="none" stroke="#404040" stroke-width="1"/><circle cx="6" cy="6" r="4" fill="#fff"/><path d="M10.5 3.5 A5 5 0 0 1 3.5 10.5" fill="none" stroke="#fff" stroke-width="1"/></svg><div class="a" style="left:467.5px;top:592px">1h</div><svg class="a" style="left:498px;top:593px" width="12" height="12" viewBox="0 0 12 12"><path d="M1.5 8.5 A5 5 0 0 1 8.5 1.5" fill="none" stroke="#808080" stroke-width="1"/><path d="M2.5 8.8 A4 4 0 0 1 8.8 2.5" fill="none" stroke="#404040" stroke-width="1"/><circle cx="6" cy="6" r="4" fill="#fff"/><path d="M10.5 3.5 A5 5 0 0 1 3.5 10.5" fill="none" stroke="#fff" stroke-width="1"/></svg><div class="a" style="left:515.5px;top:592px">4h</div><svg class="a" style="left:546px;top:593px" width="12" height="12" viewBox="0 0 12 12"><path d="M1.5 8.5 A5 5 0 0 1 8.5 1.5" fill="none" stroke="#808080" stroke-width="1"/><path d="M2.5 8.8 A4 4 0 0 1 8.8 2.5" fill="none" stroke="#404040" stroke-width="1"/><circle cx="6" cy="6" r="4" fill="#fff"/><path d="M10.5 3.5 A5 5 0 0 1 3.5 10.5" fill="none" stroke="#fff" stroke-width="1"/></svg><div class="a" style="left:563.5px;top:592px">12h</div><svg class="a" style="left:400px;top:609px" width="12" height="12" viewBox="0 0 12 12"><path d="M1.5 8.5 A5 5 0 0 1 8.5 1.5" fill="none" stroke="#808080" stroke-width="1"/><path d="M2.5 8.8 A4 4 0 0 1 8.8 2.5" fill="none" stroke="#404040" stroke-width="1"/><circle cx="6" cy="6" r="4" fill="#fff"/><path d="M10.5 3.5 A5 5 0 0 1 3.5 10.5" fill="none" stroke="#fff" stroke-width="1"/><circle cx="6" cy="6" r="1.8" fill="#000"/></svg><div class="a" style="left:417.5px;top:608px">15m</div><svg class="a" style="left:450px;top:609px" width="12" height="12" viewBox="0 0 12 12"><path d="M1.5 8.5 A5 5 0 0 1 8.5 1.5" fill="none" stroke="#808080" stroke-width="1"/><path d="M2.5 8.8 A4 4 0 0 1 8.8 2.5" fill="none" stroke="#404040" stroke-width="1"/><circle cx="6" cy="6" r="4" fill="#fff"/><path d="M10.5 3.5 A5 5 0 0 1 3.5 10.5" fill="none" stroke="#fff" stroke-width="1"/></svg><div class="a" style="left:467.5px;top:608px">2h</div><svg class="a" style="left:498px;top:609px" width="12" height="12" viewBox="0 0 12 12"><path d="M1.5 8.5 A5 5 0 0 1 8.5 1.5" fill="none" stroke="#808080" stroke-width="1"/><path d="M2.5 8.8 A4 4 0 0 1 8.8 2.5" fill="none" stroke="#404040" stroke-width="1"/><circle cx="6" cy="6" r="4" fill="#fff"/><path d="M10.5 3.5 A5 5 0 0 1 3.5 10.5" fill="none" stroke="#fff" stroke-width="1"/></svg><div class="a" style="left:515.5px;top:608px">6h</div><svg class="a" style="left:546px;top:609px" width="12" height="12" viewBox="0 0 12 12"><path d="M1.5 8.5 A5 5 0 0 1 8.5 1.5" fill="none" stroke="#808080" stroke-width="1"/><path d="M2.5 8.8 A4 4 0 0 1 8.8 2.5" fill="none" stroke="#404040" stroke-width="1"/><circle cx="6" cy="6" r="4" fill="#fff"/><path d="M10.5 3.5 A5 5 0 0 1 3.5 10.5" fill="none" stroke="#fff" stroke-width="1"/></svg><div class="a" style="left:563.5px;top:608px">24h</div><svg class="a" style="left:360px;top:633px" width="12" height="12" viewBox="0 0 12 12"><path d="M1.5 8.5 A5 5 0 0 1 8.5 1.5" fill="none" stroke="#808080" stroke-width="1"/><path d="M2.5 8.8 A4 4 0 0 1 8.8 2.5" fill="none" stroke="#404040" stroke-width="1"/><circle cx="6" cy="6" r="4" fill="#fff"/><path d="M10.5 3.5 A5 5 0 0 1 3.5 10.5" fill="none" stroke="#fff" stroke-width="1"/></svg><div class="a" style="left:378px;top:631px;color:#33dd33;font-weight:bold;font-size:11.5px">Fastlink</div><div class="a" style="left:459px;top:631px;font-weight:bold;font-size:11.5px">1h:</div><div class="a" style="left:487px;top:627px;width:41px;height:21px;background:#fff;border-top:1px solid #808080;border-left:1px solid #808080;border-right:1px solid #fff;border-bottom:1px solid #fff;box-shadow:inset 1px 1px 0 #404040, inset -1px -1px 0 #d4d0c8;overflow:hidden"><div class="a" style="left:3px;top:3px;font-size:11px">00:00</div></div><div class="a" style="left:534px;top:630px">-</div><div class="a" style="left:543px;top:627px;width:41px;height:21px;background:#fff;border-top:1px solid #808080;border-left:1px solid #808080;border-right:1px solid #fff;border-bottom:1px solid #fff;box-shadow:inset 1px 1px 0 #404040, inset -1px -1px 0 #d4d0c8;overflow:hidden"><div class="a" style="left:3px;top:3px;font-size:11px">00:00</div></div><div class="a" style="left:617px;top:586px;width:40px;height:21px;background:#fff;border-top:1px solid #808080;border-left:1px solid #808080;border-right:1px solid #fff;border-bottom:1px solid #fff;box-shadow:inset 1px 1px 0 #404040"></div><div class="a" style="left:621px;top:589px">0</div><div class="btn" style="left:639px;top:588px;width:16px;height:9px"></div><div class="btn" style="left:639px;top:597px;width:16px;height:9px"></div><svg class="a" style="left:639px;top:588px" width="16" height="18"><path d="M4 6.5L8 2.5L12 6.5Z M4 11.5L12 11.5L8 15.5Z" fill="#000"/></svg><div class="a" style="left:662px;top:590px">Minuten Offset</div><div class="btn" style="left:351px;top:695px;width:215px;height:21px"></div><div class="a" style="left:351px;top:699px;width:215px;text-align:center;font-size:11.5px;font-weight:bold">www.awekas.at</div><div class="a" style="left:351px;top:727px;font-size:13px;letter-spacing:-0.1px">Letzte Meldung:</div><div class="a" style="left:453px;top:727px;font-size:13px;letter-spacing:-0.1px">11:00</div><div class="a" style="left:490px;top:727px;font-size:13px;letter-spacing:-0.1px">10.01.2020</div>
<div class="a" style="left:0;top:881px;width:1280px;height:90px;background:#c8f8f8"></div><div class="a" style="left:88px;top:882px;width:1px;height:87px;background:#909090"></div><div class="a" style="left:89px;top:882px;width:1px;height:87px;background:#fff"></div><div class="a" style="left:205px;top:882px;width:1px;height:87px;background:#909090"></div><div class="a" style="left:206px;top:882px;width:1px;height:87px;background:#fff"></div><div class="a" style="left:323px;top:882px;width:1px;height:87px;background:#909090"></div><div class="a" style="left:324px;top:882px;width:1px;height:87px;background:#fff"></div><div class="a" style="left:441px;top:882px;width:1px;height:87px;background:#909090"></div><div class="a" style="left:442px;top:882px;width:1px;height:87px;background:#fff"></div><div class="a" style="left:559px;top:882px;width:1px;height:87px;background:#909090"></div><div class="a" style="left:560px;top:882px;width:1px;height:87px;background:#fff"></div><div class="a" style="left:677px;top:882px;width:1px;height:87px;background:#909090"></div><div class="a" style="left:678px;top:882px;width:1px;height:87px;background:#fff"></div><div class="a" style="left:795px;top:882px;width:1px;height:87px;background:#909090"></div><div class="a" style="left:796px;top:882px;width:1px;height:87px;background:#fff"></div><div class="a" style="left:913px;top:882px;width:1px;height:87px;background:#909090"></div><div class="a" style="left:914px;top:882px;width:1px;height:87px;background:#fff"></div><div class="a" style="left:0;top:969px;width:1280px;height:1px;background:#909090"></div><div class="a" style="left:8px;top:888px;font-weight:bold;font-size:12px">Sensor</div><div class="a" style="left:8px;top:904px;font-weight:bold;font-size:12px">MinWert</div><div class="a" style="left:8px;top:920px;font-weight:bold;font-size:12px">MaxWert</div><div class="a" style="left:8px;top:936px;font-weight:bold;font-size:12px">Durchschnitt</div><div class="a" style="left:8px;top:952px;font-weight:bold;font-size:12px">10.01. 12:00</div><div class="a" style="left:95px;top:888px;font-weight:bold;font-size:12px">Temp. 2 m</div><div class="a" style="left:139px;width:60px;text-align:right;top:888px;font-weight:bold;font-size:12px">°C</div><div class="a" style="left:101px;top:904px;font-size:11px">09:30</div><div class="a" style="left:119px;width:80px;text-align:right;top:904px;font-size:11px">6.4</div><div class="a" style="left:101px;top:920px;font-size:11px">20:45</div><div class="a" style="left:119px;width:80px;text-align:right;top:920px;font-size:11px">9.1</div><div class="a" style="left:119px;width:80px;text-align:right;top:936px;font-size:11px">7.96</div><div class="a" style="left:119px;width:80px;text-align:right;top:952px;font-weight:bold;font-size:12px">7.4</div><div class="a" style="left:212px;top:888px;font-weight:bold;font-size:12px">Feuchte A.</div><div class="a" style="left:256px;width:60px;text-align:right;top:888px;font-weight:bold;font-size:12px">%</div><div class="a" style="left:219px;top:904px;font-size:11px">11:45</div><div class="a" style="left:236px;width:80px;text-align:right;top:904px;font-size:11px">81</div><div class="a" style="left:219px;top:920px;font-size:11px">05:15</div><div class="a" style="left:236px;width:80px;text-align:right;top:920px;font-size:11px">97</div><div class="a" style="left:236px;width:80px;text-align:right;top:936px;font-size:11px">90</div><div class="a" style="left:215px;top:952px;font-size:11px">6.52 g/m³</div><div class="a" style="left:236px;width:80px;text-align:right;top:952px;font-weight:bold;font-size:12px">82</div><div class="a" style="left:330px;top:888px;font-weight:bold;font-size:12px">Luftdruck</div><div class="a" style="left:375px;width:60px;text-align:right;top:888px;font-weight:bold;font-size:12px">hPa</div><div class="a" style="left:337px;top:904px;font-size:11px">01:15</div><div class="a" style="left:355px;width:80px;text-align:right;top:904px;font-size:11px">1010.8</div><div class="a" style="left:337px;top:920px;font-size:11px">09:30</div><div class="a" style="left:355px;width:80px;text-align:right;top:920px;font-size:11px">1015.5</div><div class="a" style="left:330px;top:936px;font-size:11px">^1.2hPa/h</div><div class="a" style="left:355px;width:80px;text-align:right;top:936px;font-size:11px">1013.4</div><div class="a" style="left:330px;top:952px;font-size:11px">bewölkt</div><div class="a" style="left:355px;width:80px;text-align:right;top:952px;font-weight:bold;font-size:12px">1015.3</div><div class="a" style="left:448px;top:888px;font-weight:bold;font-size:12px">Wind</div><div class="a" style="left:493px;width:60px;text-align:right;top:888px;font-weight:bold;font-size:12px">km/h</div><div class="a" style="left:448px;top:904px;font-size:11px">Ø 10 min.</div><div class="a" style="left:473px;width:80px;text-align:right;top:904px;font-size:11px">9.2</div><div class="a" style="left:454px;top:920px;font-size:11px">23:30</div><div class="a" style="left:473px;width:80px;text-align:right;top:920px;font-size:11px">SW 80.8</div><div class="a" style="left:454px;top:936px;font-size:11px">786.7 km</div><div class="a" style="left:473px;width:80px;text-align:right;top:936px;font-size:11px">33.7</div><div class="a" style="left:454px;top:952px;font-size:11px">2 Bft O</div><div class="a" style="left:473px;width:80px;text-align:right;top:952px;font-weight:bold;font-size:12px">9.2</div><div class="a" style="left:566px;top:888px;font-weight:bold;font-size:12px">Regen</div><div class="a" style="left:610px;width:60px;text-align:right;top:888px;font-weight:bold;font-size:12px">l/m²</div><div class="a" style="left:566px;top:904px;font-size:11px">30 min.</div><div class="a" style="left:572px;top:920px;font-size:11px">13:30</div><div class="a" style="left:590px;width:80px;text-align:right;top:920px;font-size:11px">0.3</div><div class="a" style="left:566px;top:936px;font-size:11px">Gesamt:</div><div class="a" style="left:590px;width:80px;text-align:right;top:936px;font-size:11px">3.0</div><div class="a" style="left:569px;top:952px;font-size:11px">3.0 l/m²</div><div class="a" style="left:590px;width:80px;text-align:right;top:952px;font-weight:bold;font-size:12px">0.0</div><div class="a" style="left:685px;top:888px;font-weight:bold;font-size:12px">Taupunkt</div><div class="a" style="left:729px;width:60px;text-align:right;top:888px;font-weight:bold;font-size:12px">°C</div><div class="a" style="left:690px;top:904px;font-size:11px">09:30</div><div class="a" style="left:709px;width:80px;text-align:right;top:904px;font-size:11px">3.9</div><div class="a" style="left:690px;top:920px;font-size:11px">19:15</div><div class="a" style="left:709px;width:80px;text-align:right;top:920px;font-size:11px">7.6</div><div class="a" style="left:709px;width:80px;text-align:right;top:936px;font-size:11px">6.4</div><div class="a" style="left:709px;width:80px;text-align:right;top:952px;font-weight:bold;font-size:12px">4.5</div><div class="a" style="left:802px;top:889px;font-size:11px">Wolkenunterg</div><div class="a" style="left:826px;width:80px;text-align:right;top:889px;font-size:11px">441m</div><div class="a" style="left:802px;top:905px;font-size:11px">Sichtweite</div><div class="a" style="left:826px;width:80px;text-align:right;top:905px;font-size:11px">11-15km</div><div class="a" style="left:802px;top:921px;font-size:11px">Hitzeindex</div><div class="a" style="left:826px;width:80px;text-align:right;top:921px;font-size:11px">7.4°C</div><div class="a" style="left:802px;top:937px;font-size:11px">Virtual Temp</div><div class="a" style="left:826px;width:80px;text-align:right;top:937px;font-size:11px">8.3°C</div><div class="a" style="left:802px;top:953px;font-size:11px">Feucht-Kugel</div><div class="a" style="left:826px;width:80px;text-align:right;top:953px;font-size:11px">6.0°C</div><div class="a" style="left:920px;top:889px;font-size:11px">Schneefallgr</div><div class="a" style="left:942px;width:80px;text-align:right;top:889px;font-size:11px">1200m</div><div class="a" style="left:920px;top:905px;font-size:11px">SSI</div><div class="a" style="left:942px;width:80px;text-align:right;top:905px;font-size:11px">1.9°C</div><div class="a" style="left:920px;top:921px;font-size:11px">Dampfgehalt</div><div class="a" style="left:942px;width:80px;text-align:right;top:921px;font-size:11px">5.2g/kg</div><div class="a" style="left:920px;top:937px;font-size:11px">Dampfdruck</div><div class="a" style="left:942px;width:80px;text-align:right;top:937px;font-size:11px">8.4hPa</div><div class="a" style="left:0;top:971px;width:1280px;height:22px;background:#d4d0c8;border-top:1px solid #fff;border-bottom:1px solid #fff"></div><div class="a" style="left:1px;top:972px;width:1279px;height:2px;background:#808080"></div><div class="a" style="left:1px;top:972px;width:743px;height:20px;border-top:1px solid #808080;border-left:1px solid #808080;border-right:1px solid #fff;border-bottom:1px solid #fff"></div><div class="a" style="left:6px;top:976px;color:#000;font-size:11px">00:37  (37)</div><div class="a" style="left:680px;width:62px;text-align:right;top:976px;color:#e02020;font-size:11px">1 B269</div><div class="a" style="left:744px;top:972px;width:196px;height:20px;border-top:1px solid #808080;border-left:1px solid #808080;border-right:1px solid #fff;border-bottom:1px solid #fff"></div><div class="a" style="left:750px;top:976px;color:#000;font-size:11px">Freitag, 10.01.2020</div><div class="a" style="left:941px;top:972px;width:172px;height:20px;border-top:1px solid #808080;border-left:1px solid #808080;border-right:1px solid #fff;border-bottom:1px solid #fff"></div><div class="a" style="left:944px;top:976px;color:#000;font-size:11px">WS2500 V1.3 gefunden</div><div class="a" style="left:1114px;top:972px;width:42px;height:20px;border-top:1px solid #808080;border-left:1px solid #808080;border-right:1px solid #fff;border-bottom:1px solid #fff"></div><div class="a" style="left:1119px;top:976px;color:#000;font-size:11px">COM 1</div><div class="a" style="left:1157px;top:972px;width:53px;height:20px;border-top:1px solid #808080;border-left:1px solid #808080;border-right:1px solid #fff;border-bottom:1px solid #fff"></div><div class="a" style="left:1171px;top:976px;color:#000;font-size:11px">12:17</div><div class="a" style="left:1211px;top:972px;width:67px;height:20px;border-top:1px solid #808080;border-left:1px solid #808080;border-right:1px solid #fff;border-bottom:1px solid #fff"></div><div class="a" style="left:1218px;top:976px;color:#000;font-size:11px">10.01.2020</div><div class="a" style="left:0;top:993px;width:1280px;height:31px;background:#1d2a3b"></div><svg class="a" style="left:10px;top:1001px" width="17" height="16"><path d="M0 2.3L7 1.3V7.5H0Z M8 1.1L16 0V7.5H8Z M0 8.5H7V14.7L0 13.7Z M8 8.5H16V16L8 14.9Z" fill="#fff"/></svg><svg class="a" style="left:45px;top:1001px" width="18" height="16"><rect x="2.5" y="3.5" width="11" height="8" fill="none" stroke="#fff"/><path d="M1 1H13M1 14H13" stroke="#fff"/><rect x="15" y="1" width="2" height="2" fill="#fff"/><rect x="15" y="6" width="2" height="9" fill="#fff"/></svg><svg class="a" style="left:84px;top:1002px" width="17" height="14"><path d="M0 1H6L8 3H17V14H0Z" fill="#f3c544"/><rect x="0" y="5" width="17" height="9" fill="#fbd465"/><rect x="5" y="8" width="7" height="4" fill="#3a7bd5"/></svg><svg class="a" style="left:121px;top:1000px" width="16" height="17"><path d="M5 4 A3 3 0 0 1 11 4" fill="none" stroke="#fff" stroke-width="1.3"/><rect x="0" y="4" width="16" height="13" fill="#fff"/><rect x="4" y="7" width="3.5" height="3.5" fill="#f25022"/><rect x="8.5" y="7" width="3.5" height="3.5" fill="#7fba00"/><rect x="4" y="11.5" width="3.5" height="3.5" fill="#00a4ef"/><rect x="8.5" y="11.5" width="3.5" height="3.5" fill="#ffb900"/></svg><svg class="a" style="left:158px;top:1000px" width="19" height="18"><path d="M14.5 13.5 A5.5 5.5 0 1 1 15 9.5 H5" fill="none" stroke="#2a8ef0" stroke-width="2.6"/><path d="M2.5 15 C0 10 6 2 17.5 2.5 C18.5 4 17 6 15.5 7" fill="none" stroke="#f2c230" stroke-width="1.5"/></svg><div class="a" style="left:347px;top:993px;width:158px;height:31px;background:#3e4a58"></div><div class="a" style="left:190px;top:1021px;width:152px;height:3px;background:#7d9ac0"></div><div class="a" style="left:347px;top:1021px;width:158px;height:3px;background:#7d9ac0"></div><div class="a" style="left:508px;top:1021px;width:157px;height:3px;background:#7d9ac0"></div><div class="a" style="left:672px;top:1021px;width:154px;height:3px;background:#7d9ac0"></div><div class="a" style="left:195px;top:999px;color:#17a05a;font-weight:bold;font-size:17px">R</div><div class="a" style="left:214px;top:1002px;color:#000;font-size:11.5px">RESOL ServiceCenter</div><svg class="a" style="left:353px;top:998px" width="22" height="22" viewBox="0 0 22 22" shape-rendering="crispEdges">
<rect x="2" y="6" width="1" height="13" fill="#000"/>
<path d="M4 8 L9 6 L12 9 L15 12 L14 14 L5 14Z" fill="#f4f4f4"/>
<path d="M4 9 L6 8 L8 13 L5 14Z" fill="#a8aca0"/>
<rect x="5" y="5" width="3" height="1" fill="#000"/><rect x="7" y="6" width="3" height="2" fill="#000"/>
<rect x="9" y="9" width="1" height="1" fill="#000"/><rect x="10" y="8" width="1" height="1" fill="#000"/><rect x="11" y="7" width="1" height="1" fill="#000"/>
<circle cx="13" cy="7" r="3.6" fill="#f0f000" shape-rendering="auto"/>
<rect x="16" y="5" width="1" height="5" fill="#000"/><rect x="14" y="4" width="2" height="1" fill="#000"/><rect x="11" y="4" width="1" height="1" fill="#000"/>
<rect x="13" y="11" width="3" height="2" fill="#000"/>
<rect x="3" y="14" width="13" height="1" fill="#a0a4a0"/>
<rect x="2" y="15" width="14" height="2" fill="#000"/><rect x="2" y="17" width="12" height="1" fill="#000"/>
<rect x="3" y="15" width="1" height="1" fill="#fff"/><rect x="6" y="17" width="1" height="1" fill="#fff"/><rect x="10" y="16" width="1" height="1" fill="#fff"/><rect x="15" y="14" width="1" height="1" fill="#fff"/>
<rect x="2" y="19" width="1" height="1" fill="#000"/><rect x="5" y="19" width="1" height="1" fill="#000"/><rect x="8" y="19" width="1" height="1" fill="#000"/>
</svg><div class="a" style="left:375px;top:1002px;color:#000;font-size:11.5px">WS2500 V1.3 - Wetter...</div><div class="a" style="left:516px;top:1001px;width:16px;height:16px;background:#ef443b"></div><svg class="a" style="left:516px;top:1001px" width="16" height="16"><path d="M5 8L8 5L11 8L8 11Z" fill="#fff"/></svg><div class="a" style="left:536px;top:1002px;color:#000;font-size:11.5px">AnyDesk</div><div class="a" style="left:677px;top:1001px;width:16px;height:16px;background:#e8e8e8"></div><svg class="a" style="left:677px;top:1001px" width="16" height="16"><path d="M3 3L7 6L10 2L11 7L14 9L10 10L11 14L7 11L3 13L5 9Z" fill="#d01818"/></svg><div class="a" style="left:697px;top:1002px;color:#000;font-size:11.5px">IrfanView</div><div class="a" style="left:974px;top:996px;color:#fff;font-size:11px">U:</div><div class="a" style="left:974px;top:1010px;color:#fff;font-size:11px">D:</div><div class="a" style="left:990px;width:78px;text-align:right;top:996px;color:#fff;font-size:11px">18,04 kbit/s</div><div class="a" style="left:990px;width:78px;text-align:right;top:1010px;color:#fff;font-size:11px">35,34 kbit/s</div><svg class="a" style="left:1084px;top:1003px" width="16" height="10"><path d="M2 8L8 2L14 8" stroke="#fff" stroke-width="1.4" fill="none"/></svg><svg class="a" style="left:1107px;top:1001px" width="18" height="17"><rect x="5.5" y="2.5" width="11" height="9" fill="none" stroke="#fff"/><rect x="1.5" y="0.5" width="6" height="5" fill="#1b2636" stroke="#fff"/><path d="M11 12V15M6 15.5H16" stroke="#fff"/></svg><svg class="a" style="left:1131px;top:1001px" width="20" height="16"><path d="M1 5H4L8 1V15L4 11H1Z" fill="none" stroke="#fff"/><path d="M11 6L16 11M16 6L11 11" stroke="#fff" stroke-width="1.2"/></svg><div class="a" style="left:1160px;top:1003px;color:#0c1420;font-size:11px">DEU</div><div class="a" style="left:1195px;top:1003px;color:#0c1420;font-size:11px">12:17</div><svg class="a" style="left:1238px;top:1001px" width="18" height="18"><path d="M1 1H17V13H8L5 16V13H1Z" fill="#fff"/><path d="M4 4.5H14M4 7.5H14M4 10.5H12" stroke="#1b2636" stroke-width="1.2"/></svg>
</body></html>
